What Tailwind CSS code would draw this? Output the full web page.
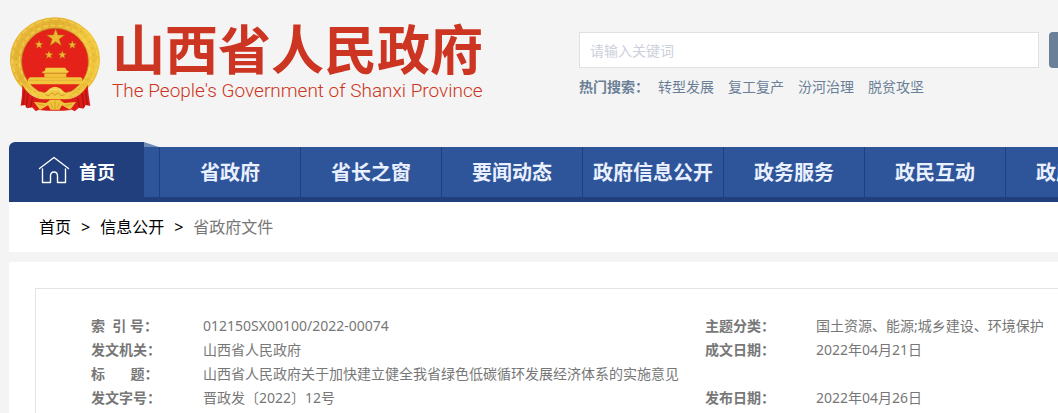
<!DOCTYPE html>
<html lang="zh-CN">
<head>
    <meta charset="UTF-8">
    <meta name="viewport" content="width=device-width, initial-scale=1.0">
    <title>山西省人民政府</title>
    <script src="https://cdn.jsdelivr.net/npm/@tailwindcss/browser@4"></script>
</head>
<body class="min-h-screen overflow-hidden bg-[#f4f4f4] font-['Noto_Sans','Noto_Sans_CJK_SC',sans-serif] text-sm text-[#777777]">
<div class="flex min-h-screen flex-col pl-[9px]">

    <!-- Header -->
    <header class="flex items-start">
        <a href="#" class="flex w-[570px] shrink-0 items-start pt-[17px] pl-px">
            <svg class="h-[95px] w-[90px] shrink-0" viewBox="30 35 270 285" aria-hidden="true">
                <defs>
                    <linearGradient id="gold" x1="0" y1="0" x2="1" y2="1">
                        <stop offset="0" stop-color="#edc043"/>
                        <stop offset=".3" stop-color="#e3b131"/>
                        <stop offset=".55" stop-color="#f1c940"/>
                        <stop offset="1" stop-color="#e6b42f"/>
                    </linearGradient>
                    <path id="star" d="M0-10 2.4-3.2 9.5-3.1 3.8 1.2 5.9 8.1 0 4 -5.9 8.1 -3.8 1.2 -9.5-3.1 -2.4-3.2Z"/>
                </defs>
                <!-- wreath -->
                <ellipse cx="165" cy="162" rx="135" ry="126" fill="url(#gold)"/>
                <path d="M31 165C33 215 65 265 130 282H200C265 265 297 215 299 165Z" fill="url(#gold)"/>
                <ellipse cx="165" cy="162" rx="128" ry="120" fill="none" stroke="#f6d455" stroke-width="4" stroke-dasharray="17 8" opacity=".8"/>
                <ellipse cx="165" cy="163" rx="117" ry="112" fill="none" stroke="#d39d2a" stroke-width="3" stroke-dasharray="6 14" opacity=".7"/>
                <ellipse cx="165" cy="164" rx="107" ry="104" fill="none" stroke="#f8da5e" stroke-width="4" stroke-dasharray="13 9" opacity=".7"/>
                <!-- red field -->
                <path d="M165 69A100 98 0 0 1 265 167C265 205 248 235 214 258L188 264 176 250Q165 242 154 250L142 264 116 258C82 235 65 205 65 167A100 98 0 0 1 165 69Z" fill="#e42219" stroke="#b97a22" stroke-width="2"/>
                <g fill="#edb72f" stroke="#b66b19" stroke-width=".6">
                    <use href="#star" transform="translate(167 98) scale(2.8)"/>
                    <use href="#star" transform="translate(117 118) scale(1.3)"/>
                    <use href="#star" transform="translate(217 119) scale(1.3)"/>
                    <use href="#star" transform="translate(147 149) scale(1.3)"/>
                    <use href="#star" transform="translate(187 149) scale(1.3)"/>
                </g>
                <!-- gate -->
                <path d="M137 187H196L200 195 207 198 202 204H130L125 200 134 197Z" fill="#f4cc42"/>
                <path d="M133 204H199V216H133Z" fill="#efc039"/>
                <path d="M132 203H201" stroke="#c98a24" stroke-width="2"/>
                <path d="M90 216H243L247 221V237H84V221Z" fill="#f1c63c"/>
                <path d="M86 225H245" stroke="#dca732" stroke-width="2"/>
                <!-- drapes -->
                <path d="M67 238C78 261 98 277 132 284L106 291 118 312 108 318 96 306 82 309 76 299 62 301 66 270Z" fill="#dc1c17"/>
                <path d="M263 238C252 261 232 277 198 284L226 291 213 312 224 318 237 307 250 310 257 299 271 302 266 270Z" fill="#dc1c17"/>
                <path d="M73 255 70 299M83 265 79 306M97 278 92 306M257 255 262 299M247 265 252 306M233 278 239 306" fill="none" stroke="#b0130f" stroke-width="4"/>
                <!-- knot and base -->
                <path d="M132 264C141 260 145 250 155 247Q165 241 176 247C186 250 190 260 199 264L226 256 196 280H134L104 256Z" fill="#f3cc44"/>
                <path d="M136 268 147 271 156 262 165 270 174 262 183 271 194 268" fill="none" stroke="#cf962b" stroke-width="3"/>
                <path d="M142 262 153 252H177L188 262" fill="none" stroke="#fae275" stroke-width="3"/>
                <path d="M116 282H214L226 290 213 314 190 316H140L117 314 102 290Z" fill="#dc1e17"/>
                <path d="M102 290 138 293 151 283H179L193 293 228 290 210 313 186 300 178 313H152L144 300 120 314Z" fill="#efc43a"/>
                <path d="M165 288V311M153 293 158 309M177 293 172 309M113 296 135 301M217 296 195 301" fill="none" stroke="#cb9028" stroke-width="2"/>
            </svg>
            <div class="pt-1 pl-3 whitespace-nowrap text-[#cc3522]">
                <h1 class="text-[53px] leading-[58px] font-bold">山西省人民政府</h1>
                <p class="font-['Roboto',sans-serif] text-[19px] leading-6 font-light">The People's Government of Shanxi Province</p>
            </div>
        </a>

        <!-- Search -->
        <div class="min-w-0 flex-1 pt-8">
            <form class="flex gap-[10px]">
                <input type="text" aria-label="关键词" placeholder="请输入关键词" class="h-9 w-[460px] shrink-0 border border-[#e0e0e0] bg-white px-[10px] text-sm placeholder-[#ccd0dc]">
                <button type="button" aria-label="搜索" class="h-9 w-20 shrink-0 rounded bg-[#6a7f98]"></button>
            </form>
            <div class="flex gap-[14px] pt-2 leading-[22px] whitespace-nowrap text-[#6a7f96]">
                <strong class="w-[65px]">热门搜索：</strong>
                <a href="#">转型发展</a>
                <a href="#">复工复产</a>
                <a href="#">汾河治理</a>
                <a href="#">脱贫攻坚</a>
            </div>
        </div>
    </header>

    <!-- Navigation -->
    <nav class="mt-[30px] flex h-[60px] items-end overflow-hidden text-xl font-bold whitespace-nowrap text-[#e9f0ff]">
        <a href="#" class="flex h-[60px] w-[135px] shrink-0 items-center gap-[9px] rounded-tl-md bg-[#203f7c] pl-[29px] text-lg text-white">
            <svg class="h-8 w-8" viewBox="0 0 32 32" fill="none" stroke="currentColor" stroke-width="1.4" stroke-linecap="round" stroke-linejoin="round" aria-hidden="true">
                <path d="M1.500 12.500 16 1.500 30.500 12.500M4.500 13V26.500H12.500V20Q12.500 16 16 16T19.500 20V26.500H27.500V13"/>
            </svg>
            首页
        </a>
        <div class="h-[60px] w-[15px] shrink-0">
            <svg class="block h-[5px] w-[15px]" viewBox="0 0 15 5" aria-hidden="true"><path d="M0 0 15 5H0Z" fill="#708ab7"/></svg>
            <div class="h-[55px] border-b-5 border-[#203f7c] bg-[#2e5499]"></div>
        </div>
        <div class="flex h-[55px] min-w-0 flex-1 overflow-hidden border-b-5 border-[#203f7c] bg-[#2e5499] leading-[52px]">
            <a href="#" class="w-[141px] shrink-0 border-l border-[#203f7c] text-center">省政府</a>
            <a href="#" class="w-[141px] shrink-0 border-l border-[#203f7c] text-center">省长之窗</a>
            <a href="#" class="w-[141px] shrink-0 border-l border-[#203f7c] text-center">要闻动态</a>
            <a href="#" class="w-[141px] shrink-0 border-l border-[#203f7c] text-center">政府信息公开</a>
            <a href="#" class="w-[141px] shrink-0 border-l border-[#203f7c] text-center">政务服务</a>
            <a href="#" class="w-[141px] shrink-0 border-l border-[#203f7c] text-center">政民互动</a>
            <a href="#" class="w-[141px] shrink-0 border-l border-[#203f7c] text-center">政府数据</a>
        </div>
    </nav>

    <!-- Breadcrumb -->
    <div class="flex h-[50px] items-center gap-[10px] bg-white pl-[30px] text-base text-black">
        <a href="#">首页</a>
        <span>&gt;</span>
        <a href="#">信息公开</a>
        <span>&gt;</span>
        <a href="#" class="text-[#777777]">省政府文件</a>
    </div>

    <!-- Document details -->
    <main class="mt-[10px] flex flex-1 flex-col overflow-hidden bg-white pt-[26px] pl-[26px]">
        <div class="flex-1 border-t border-l border-[#e4e4e4] pt-[25px] pl-[55px]">
            <table class="w-full table-fixed text-left leading-6 whitespace-nowrap">
                <colgroup>
                    <col class="w-[112px]">
                    <col class="w-[502px]">
                    <col class="w-[111px]">
                    <col>
                </colgroup>
                <tbody>
                    <tr>
                        <th scope="row">索&nbsp;&nbsp;引&nbsp;号：</th>
                        <td>012150SX00100/2022-00074</td>
                        <th scope="row">主题分类：</th>
                        <td>国土资源、能源;城乡建设、环境保护</td>
                    </tr>
                    <tr>
                        <th scope="row">发文机关：</th>
                        <td>山西省人民政府</td>
                        <th scope="row">成文日期：</th>
                        <td>2022年04月21日</td>
                    </tr>
                    <tr>
                        <th scope="row">标&nbsp;&nbsp;&nbsp;&nbsp;&nbsp;&nbsp;&nbsp;题：</th>
                        <td colspan="3">山西省人民政府关于加快建立健全我省绿色低碳循环发展经济体系的实施意见</td>
                    </tr>
                    <tr>
                        <th scope="row">发文字号：</th>
                        <td>晋政发〔2022〕12号</td>
                        <th scope="row">发布日期：</th>
                        <td>2022年04月26日</td>
                    </tr>
                </tbody>
            </table>
        </div>
    </main>
</div>
</body>
</html>
